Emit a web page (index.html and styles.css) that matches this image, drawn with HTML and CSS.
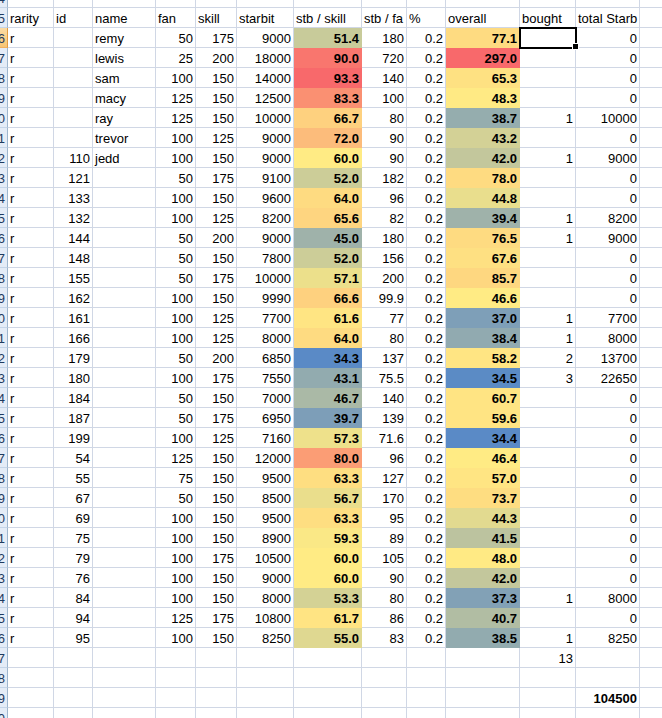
FILE: index.html
```html
<!DOCTYPE html>
<html lang="en">
<head>
<meta charset="utf-8">
<title>Starbit sheet</title>
<link rel="stylesheet" href="styles.css">
</head>
<body>
<div class="viewport">
<div class="sheet">
<div class="row"><div class="rh"><span>4</span></div><div class="c"></div><div class="c"></div><div class="c"></div><div class="c"></div><div class="c"></div><div class="c"></div><div class="c"></div><div class="c"></div><div class="c"></div><div class="c"></div><div class="c"></div><div class="c"></div><div class="c"></div></div>
<div class="row"><div class="rh"><span>5</span></div><div class="c">rarity</div><div class="c">id</div><div class="c">name</div><div class="c">fan</div><div class="c">skill</div><div class="c">starbit</div><div class="c">stb / skill</div><div class="c">stb / fa</div><div class="c">%</div><div class="c">overall</div><div class="c">bought</div><div class="c">total Starb</div><div class="c"></div></div>
<div class="row"><div class="rh sel"><span>6</span></div><div class="c">r</div><div class="c n"></div><div class="c">remy</div><div class="c n">50</div><div class="c n">175</div><div class="c n">9000</div><div class="c n cs" style="background:#C8CB9A">51.4</div><div class="c n">180</div><div class="c n">0.2</div><div class="c n cs" style="background:#FEDB81">77.1</div><div class="c n active"><span class="sel-box"></span><span class="sel-handle"></span></div><div class="c n">0</div><div class="c"></div></div>
<div class="row"><div class="rh"><span>7</span></div><div class="c">r</div><div class="c n"></div><div class="c">lewis</div><div class="c n">25</div><div class="c n">200</div><div class="c n">18000</div><div class="c n cs" style="background:#F9766E">90.0</div><div class="c n">720</div><div class="c n">0.2</div><div class="c n cs" style="background:#F8696B">297.0</div><div class="c n"></div><div class="c n">0</div><div class="c"></div></div>
<div class="row"><div class="rh"><span>8</span></div><div class="c">r</div><div class="c n"></div><div class="c">sam</div><div class="c n">100</div><div class="c n">150</div><div class="c n">14000</div><div class="c n cs" style="background:#F8696B">93.3</div><div class="c n">140</div><div class="c n">0.2</div><div class="c n cs" style="background:#FEE182">65.3</div><div class="c n"></div><div class="c n">0</div><div class="c"></div></div>
<div class="row"><div class="rh"><span>9</span></div><div class="c">r</div><div class="c n"></div><div class="c">macy</div><div class="c n">125</div><div class="c n">150</div><div class="c n">12500</div><div class="c n cs" style="background:#FA9072">83.3</div><div class="c n">100</div><div class="c n">0.2</div><div class="c n cs" style="background:#FFEA84">48.3</div><div class="c n"></div><div class="c n">0</div><div class="c"></div></div>
<div class="row"><div class="rh"><span>10</span></div><div class="c">r</div><div class="c n"></div><div class="c">ray</div><div class="c n">125</div><div class="c n">150</div><div class="c n">10000</div><div class="c n cs" style="background:#FED17F">66.7</div><div class="c n">80</div><div class="c n">0.2</div><div class="c n cs" style="background:#95ADAE">38.7</div><div class="c n">1</div><div class="c n">10000</div><div class="c"></div></div>
<div class="row"><div class="rh"><span>11</span></div><div class="c">r</div><div class="c n"></div><div class="c">trevor</div><div class="c n">100</div><div class="c n">125</div><div class="c n">9000</div><div class="c n cs" style="background:#FCBC7B">72.0</div><div class="c n">90</div><div class="c n">0.2</div><div class="c n cs" style="background:#D3D196">43.2</div><div class="c n"></div><div class="c n">0</div><div class="c"></div></div>
<div class="row"><div class="rh"><span>12</span></div><div class="c">r</div><div class="c n">110</div><div class="c">jedd</div><div class="c n">100</div><div class="c n">150</div><div class="c n">9000</div><div class="c n cs" style="background:#FFEB84">60.0</div><div class="c n">90</div><div class="c n">0.2</div><div class="c n cs" style="background:#C3C79C">42.0</div><div class="c n">1</div><div class="c n">9000</div><div class="c"></div></div>
<div class="row"><div class="rh"><span>13</span></div><div class="c">r</div><div class="c n">121</div><div class="c"></div><div class="c n">50</div><div class="c n">175</div><div class="c n">9100</div><div class="c n cs" style="background:#CCCD98">52.0</div><div class="c n">182</div><div class="c n">0.2</div><div class="c n cs" style="background:#FEDB81">78.0</div><div class="c n"></div><div class="c n">0</div><div class="c"></div></div>
<div class="row"><div class="rh"><span>14</span></div><div class="c">r</div><div class="c n">133</div><div class="c"></div><div class="c n">100</div><div class="c n">150</div><div class="c n">9600</div><div class="c n cs" style="background:#FEDB81">64.0</div><div class="c n">96</div><div class="c n">0.2</div><div class="c n cs" style="background:#E9DE8D">44.8</div><div class="c n"></div><div class="c n">0</div><div class="c"></div></div>
<div class="row"><div class="rh"><span>15</span></div><div class="c">r</div><div class="c n">132</div><div class="c"></div><div class="c n">100</div><div class="c n">125</div><div class="c n">8200</div><div class="c n cs" style="background:#FED580">65.6</div><div class="c n">82</div><div class="c n">0.2</div><div class="c n cs" style="background:#9FB2AA">39.4</div><div class="c n">1</div><div class="c n">8200</div><div class="c"></div></div>
<div class="row"><div class="rh"><span>16</span></div><div class="c">r</div><div class="c n">144</div><div class="c"></div><div class="c n">50</div><div class="c n">200</div><div class="c n">9000</div><div class="c n cs" style="background:#9FB2AA">45.0</div><div class="c n">180</div><div class="c n">0.2</div><div class="c n cs" style="background:#FEDB81">76.5</div><div class="c n">1</div><div class="c n">9000</div><div class="c"></div></div>
<div class="row"><div class="rh"><span>17</span></div><div class="c">r</div><div class="c n">148</div><div class="c"></div><div class="c n">50</div><div class="c n">150</div><div class="c n">7800</div><div class="c n cs" style="background:#CCCD98">52.0</div><div class="c n">156</div><div class="c n">0.2</div><div class="c n cs" style="background:#FEE082">67.6</div><div class="c n"></div><div class="c n">0</div><div class="c"></div></div>
<div class="row"><div class="rh"><span>18</span></div><div class="c">r</div><div class="c n">155</div><div class="c"></div><div class="c n">50</div><div class="c n">175</div><div class="c n">10000</div><div class="c n cs" style="background:#ECE08B">57.1</div><div class="c n">200</div><div class="c n">0.2</div><div class="c n cs" style="background:#FED780">85.7</div><div class="c n"></div><div class="c n">0</div><div class="c"></div></div>
<div class="row"><div class="rh"><span>19</span></div><div class="c">r</div><div class="c n">162</div><div class="c"></div><div class="c n">100</div><div class="c n">150</div><div class="c n">9990</div><div class="c n cs" style="background:#FED17F">66.6</div><div class="c n">99.9</div><div class="c n">0.2</div><div class="c n cs" style="background:#FFEB84">46.6</div><div class="c n"></div><div class="c n">0</div><div class="c"></div></div>
<div class="row"><div class="rh"><span>20</span></div><div class="c">r</div><div class="c n">161</div><div class="c"></div><div class="c n">100</div><div class="c n">125</div><div class="c n">7700</div><div class="c n cs" style="background:#FFE583">61.6</div><div class="c n">77</div><div class="c n">0.2</div><div class="c n cs" style="background:#7E9FB8">37.0</div><div class="c n">1</div><div class="c n">7700</div><div class="c"></div></div>
<div class="row"><div class="rh"><span>21</span></div><div class="c">r</div><div class="c n">166</div><div class="c"></div><div class="c n">100</div><div class="c n">125</div><div class="c n">8000</div><div class="c n cs" style="background:#FEDB81">64.0</div><div class="c n">80</div><div class="c n">0.2</div><div class="c n cs" style="background:#91AAB0">38.4</div><div class="c n">1</div><div class="c n">8000</div><div class="c"></div></div>
<div class="row"><div class="rh"><span>22</span></div><div class="c">r</div><div class="c n">179</div><div class="c"></div><div class="c n">50</div><div class="c n">200</div><div class="c n">6850</div><div class="c n cs" style="background:#5A8AC6">34.3</div><div class="c n">137</div><div class="c n">0.2</div><div class="c n cs" style="background:#FFE583">58.2</div><div class="c n">2</div><div class="c n">13700</div><div class="c"></div></div>
<div class="row"><div class="rh"><span>23</span></div><div class="c">r</div><div class="c n">180</div><div class="c"></div><div class="c n">100</div><div class="c n">175</div><div class="c n">7550</div><div class="c n cs" style="background:#92ABAF">43.1</div><div class="c n">75.5</div><div class="c n">0.2</div><div class="c n cs" style="background:#5B8BC5">34.5</div><div class="c n">3</div><div class="c n">22650</div><div class="c"></div></div>
<div class="row"><div class="rh"><span>24</span></div><div class="c">r</div><div class="c n">184</div><div class="c"></div><div class="c n">50</div><div class="c n">150</div><div class="c n">7000</div><div class="c n cs" style="background:#AAB9A6">46.7</div><div class="c n">140</div><div class="c n">0.2</div><div class="c n cs" style="background:#FFE483">60.7</div><div class="c n"></div><div class="c n">0</div><div class="c"></div></div>
<div class="row"><div class="rh"><span>25</span></div><div class="c">r</div><div class="c n">187</div><div class="c"></div><div class="c n">50</div><div class="c n">175</div><div class="c n">6950</div><div class="c n cs" style="background:#7D9EB8">39.7</div><div class="c n">139</div><div class="c n">0.2</div><div class="c n cs" style="background:#FFE483">59.6</div><div class="c n"></div><div class="c n">0</div><div class="c"></div></div>
<div class="row"><div class="rh"><span>26</span></div><div class="c">r</div><div class="c n">199</div><div class="c"></div><div class="c n">100</div><div class="c n">125</div><div class="c n">7160</div><div class="c n cs" style="background:#EEE18B">57.3</div><div class="c n">71.6</div><div class="c n">0.2</div><div class="c n cs" style="background:#5A8AC6">34.4</div><div class="c n"></div><div class="c n">0</div><div class="c"></div></div>
<div class="row"><div class="rh"><span>27</span></div><div class="c">r</div><div class="c n">54</div><div class="c"></div><div class="c n">125</div><div class="c n">150</div><div class="c n">12000</div><div class="c n cs" style="background:#FB9D75">80.0</div><div class="c n">96</div><div class="c n">0.2</div><div class="c n cs" style="background:#FFEB84">46.4</div><div class="c n"></div><div class="c n">0</div><div class="c"></div></div>
<div class="row"><div class="rh"><span>28</span></div><div class="c">r</div><div class="c n">55</div><div class="c"></div><div class="c n">75</div><div class="c n">150</div><div class="c n">9500</div><div class="c n cs" style="background:#FEDE81">63.3</div><div class="c n">127</div><div class="c n">0.2</div><div class="c n cs" style="background:#FFE583">57.0</div><div class="c n"></div><div class="c n">0</div><div class="c"></div></div>
<div class="row"><div class="rh"><span>29</span></div><div class="c">r</div><div class="c n">67</div><div class="c"></div><div class="c n">50</div><div class="c n">150</div><div class="c n">8500</div><div class="c n cs" style="background:#EADE8C">56.7</div><div class="c n">170</div><div class="c n">0.2</div><div class="c n cs" style="background:#FEDD81">73.7</div><div class="c n"></div><div class="c n">0</div><div class="c"></div></div>
<div class="row"><div class="rh"><span>30</span></div><div class="c">r</div><div class="c n">69</div><div class="c"></div><div class="c n">100</div><div class="c n">150</div><div class="c n">9500</div><div class="c n cs" style="background:#FEDE81">63.3</div><div class="c n">95</div><div class="c n">0.2</div><div class="c n cs" style="background:#E2DA90">44.3</div><div class="c n"></div><div class="c n">0</div><div class="c"></div></div>
<div class="row"><div class="rh"><span>31</span></div><div class="c">r</div><div class="c n">75</div><div class="c"></div><div class="c n">100</div><div class="c n">150</div><div class="c n">8900</div><div class="c n cs" style="background:#FAE886">59.3</div><div class="c n">89</div><div class="c n">0.2</div><div class="c n cs" style="background:#BCC39F">41.5</div><div class="c n"></div><div class="c n">0</div><div class="c"></div></div>
<div class="row"><div class="rh"><span>32</span></div><div class="c">r</div><div class="c n">79</div><div class="c"></div><div class="c n">100</div><div class="c n">175</div><div class="c n">10500</div><div class="c n cs" style="background:#FFEB84">60.0</div><div class="c n">105</div><div class="c n">0.2</div><div class="c n cs" style="background:#FFEA84">48.0</div><div class="c n"></div><div class="c n">0</div><div class="c"></div></div>
<div class="row"><div class="rh"><span>33</span></div><div class="c">r</div><div class="c n">76</div><div class="c"></div><div class="c n">100</div><div class="c n">150</div><div class="c n">9000</div><div class="c n cs" style="background:#FFEB84">60.0</div><div class="c n">90</div><div class="c n">0.2</div><div class="c n cs" style="background:#C3C79C">42.0</div><div class="c n"></div><div class="c n">0</div><div class="c"></div></div>
<div class="row"><div class="rh"><span>34</span></div><div class="c">r</div><div class="c n">84</div><div class="c"></div><div class="c n">100</div><div class="c n">150</div><div class="c n">8000</div><div class="c n cs" style="background:#D4D295">53.3</div><div class="c n">80</div><div class="c n">0.2</div><div class="c n cs" style="background:#82A1B6">37.3</div><div class="c n">1</div><div class="c n">8000</div><div class="c"></div></div>
<div class="row"><div class="rh"><span>35</span></div><div class="c">r</div><div class="c n">94</div><div class="c"></div><div class="c n">125</div><div class="c n">175</div><div class="c n">10800</div><div class="c n cs" style="background:#FFE483">61.7</div><div class="c n">86</div><div class="c n">0.2</div><div class="c n cs" style="background:#B1BDA3">40.7</div><div class="c n"></div><div class="c n">0</div><div class="c"></div></div>
<div class="row"><div class="rh"><span>36</span></div><div class="c">r</div><div class="c n">95</div><div class="c"></div><div class="c n">100</div><div class="c n">150</div><div class="c n">8250</div><div class="c n cs" style="background:#DFD891">55.0</div><div class="c n">83</div><div class="c n">0.2</div><div class="c n cs" style="background:#92ABAF">38.5</div><div class="c n">1</div><div class="c n">8250</div><div class="c"></div></div>
<div class="row"><div class="rh"><span>37</span></div><div class="c"></div><div class="c"></div><div class="c"></div><div class="c"></div><div class="c"></div><div class="c"></div><div class="c"></div><div class="c"></div><div class="c"></div><div class="c"></div><div class="c n">13</div><div class="c"></div><div class="c"></div></div>
<div class="row"><div class="rh"><span>38</span></div><div class="c"></div><div class="c"></div><div class="c"></div><div class="c"></div><div class="c"></div><div class="c"></div><div class="c"></div><div class="c"></div><div class="c"></div><div class="c"></div><div class="c"></div><div class="c"></div><div class="c"></div></div>
<div class="row"><div class="rh"><span>39</span></div><div class="c"></div><div class="c"></div><div class="c"></div><div class="c"></div><div class="c"></div><div class="c"></div><div class="c"></div><div class="c"></div><div class="c"></div><div class="c"></div><div class="c"></div><div class="c n b">104500</div><div class="c"></div></div>
<div class="row"><div class="rh"><span>40</span></div><div class="c"></div><div class="c"></div><div class="c"></div><div class="c"></div><div class="c"></div><div class="c"></div><div class="c"></div><div class="c"></div><div class="c"></div><div class="c"></div><div class="c"></div><div class="c"></div><div class="c"></div></div>
</div>
</div>
</body>
</html>
```
FILE: styles.css
```css
html, body {
  margin: 0;
  padding: 0;
  background: #ffffff;
}

.viewport {
  width: 662px;
  height: 718px;
  overflow: hidden;
  position: relative;
}

.sheet {
  display: grid;
  grid-template-columns: 30px 46px 39px 63px 40px 41px 57px 68px 45px 39px 74px 56px 64px 64px;
  grid-auto-rows: 20px;
  width: max-content;
  margin: -12px 0 0 -22px;
  font-family: "Liberation Sans", Arial, sans-serif;
  font-size: 13px;
  line-height: 15px;
  color: #000000;
}

.row {
  display: contents;
}

.c {
  box-sizing: border-box;
  border-right: 1px solid #d0d7e5;
  border-bottom: 1px solid #d0d7e5;
  padding: 0 2px 1px 2px;
  display: flex;
  align-items: flex-end;
  justify-content: flex-start;
  white-space: nowrap;
  overflow: hidden;
}

.n {
  justify-content: flex-end;
}

.b {
  font-weight: bold;
}

.cs {
  font-weight: bold;
  border-color: transparent;
}

.rh {
  box-sizing: border-box;
  background: #e4ecf7;
  border-right: 1px solid #9eb6ce;
  border-bottom: 1px solid #c5d5e8;
  padding: 0 2px 1px 0;
  display: flex;
  align-items: flex-end;
  justify-content: flex-end;
  white-space: nowrap;
  overflow: hidden;
  color: #1e3a5f;
}

.rh.sel {
  background: linear-gradient(#fbdca5, #f7c574);
  border-right-color: #e29b3f;
  border-bottom-color: #f0b060;
}

.active {
  position: relative;
  overflow: visible;
  z-index: 2;
}

.sel-box {
  position: absolute;
  left: -1px;
  top: -1px;
  width: 58px;
  height: 22px;
  box-sizing: border-box;
  border: 2px solid #000000;
}

.sel-handle {
  position: absolute;
  left: 52px;
  top: 15px;
  width: 5px;
  height: 5px;
  background: #000000;
  border: 1px solid #ffffff;
}
```
